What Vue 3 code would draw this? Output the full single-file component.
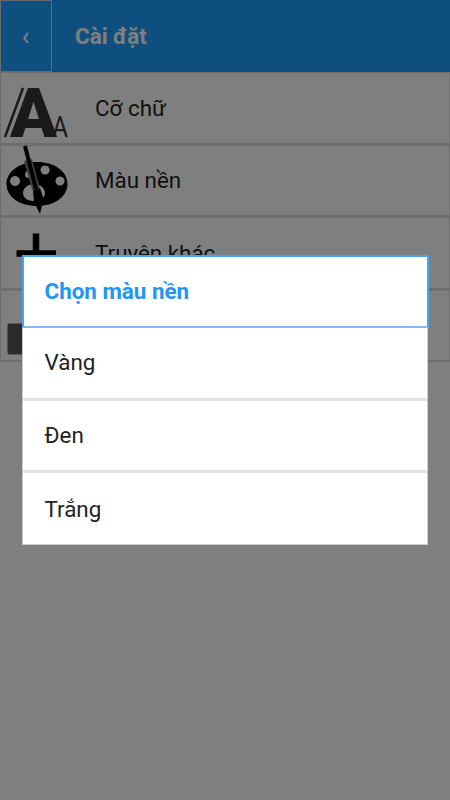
<template>
  <div class="page">
    <header class="topbar">
      <button class="back">
        <svg width="8" height="12" viewBox="0 0 8 12"><path d="M6 1 2.200 6 6 11" fill="none" stroke="#fff" stroke-width="2" /></svg>
      </button>
      <h1>Cài đặt</h1>
    </header>

    <ul class="menu">
      <li v-for="item in items" :key="item.id" class="menu-row">
        <span class="menu-icon">
          <svg v-if="item.id === 'size'" width="72" height="70" viewBox="0 0 72 70">
            <path d="M22 15 4 64" fill="none" stroke="#353535" stroke-width="2.500" />
            <text x="9" y="64" class="big-a">A</text>
            <text x="51" y="64" class="small-a" textLength="16" lengthAdjust="spacingAndGlyphs">A</text>
          </svg>
          <svg v-else-if="item.id === 'color'" width="72" height="70" viewBox="0 0 72 70">
            <path fill-rule="evenodd" d="M36 17c17 0 30.500 9 30.500 22S53 61 36 61 5.500 52 5.500 39 19 17 36 17Z M14 31a5 5 0 1 0 .1 0Z M44 20.500a4.500 4.500 0 1 0 .1 0Z M59 31.500a4.500 4.500 0 1 0 .1 0Z M27 26a3 3.500 0 1 0 .1 0Z M33 39c6 0 11 4 11 9s-5 8-11 8-11-3-11-8 5-9 11-9Z" fill="#000" />
            <path d="M27 15 35 44" stroke="#808080" stroke-width="8" />
            <path d="M24 1 35 44" stroke="#000" stroke-width="4" />
            <path d="M32 45l7-2 3.500 11L39 69l-6-12Z" fill="#000" />
          </svg>
          <svg v-else-if="item.id === 'other'" width="72" height="70" viewBox="0 0 72 70">
            <path d="M35 15.500V60M15.500 35.500H55" stroke="#000" stroke-width="6.500" />
          </svg>
          <svg v-else width="72" height="70" viewBox="0 0 72 70">
            <rect x="6.500" y="33.500" width="30" height="31" rx="2" fill="#555" />
          </svg>
        </span>
        <span class="menu-label">{{ item.label }}</span>
      </li>
    </ul>

    <div class="overlay">
      <div class="dialog">
        <h2>Chọn màu nền</h2>
        <div v-for="color in colors" :key="color" class="option">{{ color }}</div>
      </div>
    </div>
  </div>
</template>

<script setup>
const items = [
  { id: 'size', label: 'Cỡ chữ' },
  { id: 'color', label: 'Màu nền' },
  { id: 'other', label: 'Truyện khác' },
  { id: 'about', label: 'Giới thiệu' }
]
const colors = ['Vàng', 'Đen', 'Trắng']
</script>

<style scoped>
.page { position: relative; width: 450px; height: 800px; overflow: hidden; background: #fff; font-family: Roboto, "Liberation Sans", sans-serif; }
.topbar { display: flex; align-items: center; height: 72px; background: #1e9fff; box-sizing: border-box; }
.back { width: 52px; height: 72px; flex: none; padding: 4px 0 0; display: flex; align-items: center; justify-content: center; background: #1e9fff; border: 1.500px solid #c8d4de; box-sizing: border-box; }
h1 { margin: 0 0 0 23px; font-size: 22.400px; font-weight: 700; color: #fff; }
.menu { list-style: none; margin: 0; padding: 0; }
.menu-row { display: flex; align-items: center; height: 72.500px; box-sizing: border-box; border: 1px solid #ddd; border-bottom-width: 2px; }
.menu-icon { width: 94px; height: 70px; flex: none; display: flex; align-items: center; }
.menu-icon svg { overflow: visible; }
.menu-label { font-size: 22.400px; color: #222; }
.big-a { font-family: Roboto, sans-serif; font-weight: 900; font-size: 69px; fill: #353535; }
.small-a { font-family: Roboto, sans-serif; font-size: 29px; fill: #353535; }
.overlay { position: absolute; inset: 0; background: rgba(0, 0, 0, 0.5); display: flex; justify-content: center; padding-top: 255px; box-sizing: border-box; }
.dialog { width: 406px; height: 290px; background: #fff; border: 1.500px solid #ccc; border-top: 0; box-sizing: border-box; }
h2 { margin: 0 -1.500px; height: 73px; box-sizing: border-box; display: flex; align-items: center; padding: 0 0 2px 21px; font-size: 22.400px; font-weight: 700; color: #2196f3; border: 2px solid #42a5f5; border-bottom-color: #7cbcf8; }
.option { height: 72.500px; box-sizing: border-box; display: flex; align-items: center; padding: 0 0 1px 21.500px; font-size: 22.400px; color: #222; border-bottom: 3px solid #e2e2e2; }
.option:last-child { border-bottom: 0; }
</style>
